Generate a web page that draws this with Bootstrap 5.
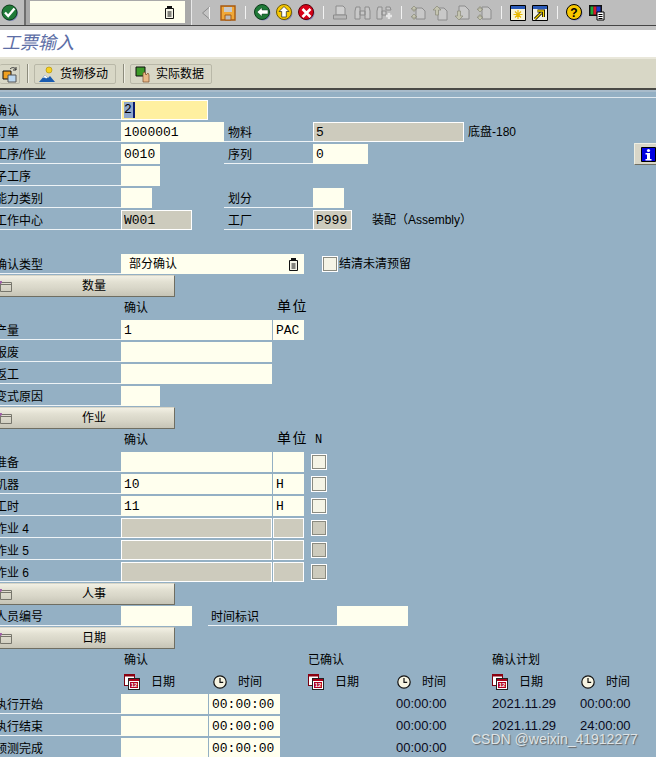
<!DOCTYPE html>
<html lang="zh">
<head>
<meta charset="UTF-8">
<title>工票输入</title>
<link rel="stylesheet" href="https://cdn.jsdelivr.net/npm/bootstrap@5.3.0/dist/css/bootstrap.min.css">
<style>
body { width: 656px; height: 757px; overflow: hidden; background: #94b0c4; position: relative;
  font-family: "Liberation Sans", "Noto Sans CJK SC", sans-serif; font-size: 12px; color: #000; }
svg { display: block; }

/* system toolbar */
.sys-bar { height: 30px; background: #bdbdbd; box-shadow: inset 0 -4px 0 #c4c4c4, inset 0 -5px 0 #454545, inset 0 -3px 0 #bdbdbd; }
.sys-inner { height: 25px; }
.tb-ok { width: 26px; padding-left: 1px; border-right: 2px solid #6e6e6e; height: 25px; }
.cmd-wrap { width: 166px; height: 25px; background: #a9a9a9; border-right: 1px solid #e8e8e8; padding: 1px 6px 2px 4px; }
.cmd-box { height: 22px; background: #ffffee; padding-right: 10px; }
.tb-gap { width: 3px; }
.tb-ico { width: 22px; height: 25px; }
.tb-sep { width: 12px; height: 25px; }
.tb-sep::after { content: ""; width: 1px; height: 13px; background: #f2f2f2; }

/* title */
.title-bar { height: 29px; background: #fff; border-bottom: 2px solid #e9e7da; padding-left: 2px; }
.title-txt { font-size: 18px; font-style: italic; color: #5d6ea6; line-height: 27px; }

/* application toolbar */
.app-bar { height: 31px; background: #d8d7c6; border-bottom: 2px solid #4a4a46; padding-top: 5px; }
.app-btn { height: 20px; padding: 0 4px; font-size: 12px; line-height: 18px; border: 1px solid #b9b8a8; border-radius: 2px; background: #d8d7c6; color: #000; white-space: nowrap; }
.app-btn-ico { width: 20px; padding: 0 0 0 2px; border-left: 0; margin-right: 7px; }
.app-sep { width: 1px; height: 19px; background: #8c8b7c; margin-right: 6px; box-shadow: 1px 0 0 #f0efe4; }
.app-btn-wide { width: 82px; margin-right: 7px; gap: 4px; }
.strip { height: 8px; background: #94b0c4; border-bottom: 1px solid #dfe8ee; box-shadow: inset 0 2px 0 #a9bccb; }

/* form */
.sap-form { padding-top: 2px; margin-left: -5px; }
.sap-row { height: 22px; }
.lbl { height: 20px; border-bottom: 1px solid #eef3f6; line-height: 22px; font-size: 12px; overflow: hidden; white-space: nowrap; flex: none; }
.lbl-a { width: 126px; }
.lbl-b { width: 89px; padding-left: 4px; }
.lbl-c { width: 129px; margin-left: 16px; padding-left: 3px; }
.fld { height: 20px; flex: none; padding: 1px 3px 0; border: 0; border-radius: 0; background: #ffffee; font-family: "Liberation Mono", monospace; font-size: 13px; line-height: 19px; color: #000; outline: 0; }
.fld-off { background: #cdcbbd; border: 1px solid #fff; padding: 0 2px; line-height: 18px; }
.fld-req { background: #fff0a0; border: 1px solid #fff; padding: 0 2px; line-height: 18px; }
.sel-txt { background: #8ea6cc; border-right: 2px solid #0c1c70; display: inline-block; height: 16px; line-height: 16px; padding-right: 1px; }
.w31 { width: 31px; } .w39 { width: 39px; } .w55 { width: 55px; } .w71 { width: 71px; }
.w87 { width: 87px; } .w103 { width: 103px; } .w151 { width: 151px; } .w183 { width: 183px; }
.gap1 { width: 1px; flex: none; }
.gap-b { width: 64px; flex: none; }
.gap-c { width: 72px; flex: none; }
.plain { font-size: 12px; line-height: 21px; white-space: nowrap; flex: none; }
.num { font-size: 13px; line-height: 20px; color: #0a0a20; }
.unit { font-size: 14px; letter-spacing: 1.5px; line-height: 17px; }
.chk { width: 14px; height: 14px; margin: 3px 0 0; flex: none; border: 1px solid #8b8b80; border-radius: 0; background: #f5f4e6; box-shadow: 0 0 0 1px #fff; appearance: none; }
.chk-off { background: #cdcbbd; }

.sec-btn { width: 180px; height: 22px; margin: -1px 0 1px; padding: 0 0 0 18px; border: 1px solid; border-color: #d8d6c8 #6f6e62 #6f6e62 #d8d6c8; border-radius: 1px; font-size: 12px; line-height: 20px; color: #000;
  background: linear-gradient(#f2f0e4, #e2e0d2 30%, #d8d6c8 60%, #c6c4b6); position: relative; text-align: center; }
.sec-ico { position: absolute; left: 4px; top: 5px; }
.info-btn { position: absolute; left: 634px; top: 143px; width: 30px; height: 22px; padding: 0 0 0 6px; border: 1px solid; border-color: #eeeee2 #6f6e62 #6f6e62 #eeeee2; border-radius: 1px; background: #d8d6c8; }
.mark-wm { position: absolute; left: 471px; top: 729px; font-size: 14px; color: #dfe4e6; text-shadow: 1px 1px 1px #666; white-space: nowrap; }
.col-ico { flex: none; }
.wk-lbl { margin-left: 32px; }
.asm-txt { margin-left: 20px; }
.type-sel { padding: 0 5px 0 8px; font-family: "Liberation Sans", "Noto Sans CJK SC", sans-serif; font-size: 12px; }
.ms-chk { margin-left: 19px; margin-top: 3px; }
.ms-txt { margin-left: 2px; }
.ms-n { margin-left: 8px; }
.hd-a { margin-left: 129px; width: 153px; }
.hd-c1 { width: 184px; }
.hd-c2 { width: 184px; }
.hd-n { margin-left: 7px; font-family: "Liberation Mono", monospace; font-size: 12px; line-height: 20px; }
.ico-row { padding-left: 129px; }
.ic-cell { display: flex; align-items: center; gap: 11px; width: 89px; flex: none; height: 20px; }
.ic-time { width: 95px; }
.val-t1 { margin-left: 116px; width: 96px; }
.val-d { width: 88px; }
</style>
</head>
<body>
<svg width="0" height="0" class="position-absolute">
  <symbol id="i-cal" viewBox="0 0 16 16">
    <rect x=".5" y=".5" width="10" height="11" fill="#fff" stroke="#7a0010"/><rect x="0" y="0" width="11" height="2.5" fill="#8a0010"/>
    <rect x="4.500" y="4.500" width="11" height="11" fill="#fff" stroke="#222"/><rect x="5" y="5" width="10" height="2" fill="#a80018"/>
    <rect x="6" y="8" width="8" height="6" fill="#b00020"/><text x="10" y="13.400" font-size="6" font-weight="700" fill="#fff" text-anchor="middle" font-family="Liberation Sans">12</text>
  </symbol>
  <symbol id="i-clock" viewBox="0 0 14 14">
    <circle cx="7" cy="7" r="6.200" fill="#f6f4e2" stroke="#111" stroke-width="1.200"/><path d="M7 3v4.300h3.200" fill="none" stroke="#111" stroke-width="1.200"/>
  </symbol>
  <symbol id="i-fold" viewBox="0 0 12 12">
    <path d="M.5 1.500h11v9H.5z" fill="none" stroke="#77766c"/><path d="M.5 3.500h11" stroke="#77766c"/><circle cx="0" cy="1" r="2" fill="#a060a8"/>
  </symbol>
  <symbol id="i-f4" viewBox="0 0 11 13">
    <path d="M1.500 2.500h8v10h-8z" fill="#f4f4e8" stroke="#111"/><path d="M3 0h5v3H3z" fill="#111"/><path d="M3.500 6h4M3.500 8h4M3.500 10h4" stroke="#111"/>
  </symbol>
</svg>

<header class="sys-bar">
  <div class="sys-inner d-flex align-items-center">
    <div class="tb-ok d-flex align-items-center">
      <svg width="18" height="18" viewBox="0 0 18 18"><circle cx="9.500" cy="9.500" r="7.500" fill="#7e84b8"/><circle cx="8.500" cy="8.500" r="7.500" fill="#1f7a38" stroke="#0b3a18"/><path d="M4 8.500l3.200 3.500L13.500 4.500" fill="none" stroke="#fff" stroke-width="2.400"/></svg>
    </div>
    <div class="cmd-wrap">
      <div class="cmd-box d-flex align-items-center justify-content-end"><svg width="11" height="13"><use href="#i-f4"/></svg></div>
    </div>
    <div class="tb-gap"></div>
    <div class="tb-ico d-flex align-items-center justify-content-center"><svg width="10" height="14" viewBox="0 0 10 14"><path d="M8.500 1L1.500 7l7 6z" fill="#c4c4c4" stroke="#8a8a8a"/><path d="M8.500 1v12" stroke="#f4f4f4"/></svg></div>
    <div class="tb-ico d-flex align-items-center justify-content-center"><svg width="16" height="16" viewBox="0 0 16 16"><path d="M1 1h14v14H1z" fill="#f0a838" stroke="#a85a10" stroke-width="1.400"/><path d="M4 2h8v5H4z" fill="#c9c9c9"/><path d="M5 10h6v5H5z" fill="#bcbcbc" stroke="#a85a10"/></svg></div>
    <div class="tb-sep d-flex align-items-center justify-content-center"></div>
    <div class="tb-ico d-flex align-items-center justify-content-center"><svg width="17" height="17" viewBox="0 0 17 17"><circle cx="9" cy="9" r="7.500" fill="#7e84b8"/><circle cx="8" cy="8" r="7.500" fill="#1f7a38" stroke="#0b3a18"/><path d="M3 8l5-4.500V6h6v4H8v2.500z" fill="#fff" stroke="#0b3a18" stroke-width=".5"/></svg></div>
    <div class="tb-ico d-flex align-items-center justify-content-center"><svg width="17" height="17" viewBox="0 0 17 17"><circle cx="9" cy="9" r="7.500" fill="#7e84b8"/><circle cx="8" cy="8" r="7.500" fill="#f8c800" stroke="#705a00"/><path d="M8 2.500l5 5h-2.700V13H5.700V7.500H3z" fill="#fff" stroke="#222" stroke-width=".7"/></svg></div>
    <div class="tb-ico d-flex align-items-center justify-content-center"><svg width="17" height="17" viewBox="0 0 17 17"><circle cx="9" cy="9" r="7.500" fill="#7e84b8"/><circle cx="8" cy="8" r="7.500" fill="#d80018" stroke="#5a0008"/><path d="M4.500 5l8 8M12.500 5l-8 8" stroke="#fff" stroke-width="2.600"/></svg></div>
    <div class="tb-sep d-flex align-items-center justify-content-center"></div>
    <div class="tb-ico d-flex align-items-center justify-content-center"><svg width="16" height="16" viewBox="0 0 16 16"><path d="M4 1h7l2 2v7H4z" fill="#cfcfcf" stroke="#8c8c8c"/><path d="M1.500 10h13v4h-13z" fill="#b8b8b8" stroke="#8c8c8c"/></svg></div>
    <div class="tb-ico d-flex align-items-center justify-content-center"><svg width="17" height="16" viewBox="0 0 17 16"><path d="M2 2h4v12H1V6zM11 2h4l1 4v8h-5zM6 6h5v4H6z" fill="#c8c8c8" stroke="#8c8c8c"/></svg></div>
    <div class="tb-ico d-flex align-items-center justify-content-center"><svg width="17" height="16" viewBox="0 0 17 16"><path d="M2 2h4v12H1V6zM10 2h4l1 3H10zM6 6h4v4H6z" fill="#c8c8c8" stroke="#8c8c8c"/><path d="M10 11h6M13 8v6" stroke="#e6e6e6" stroke-width="2.400"/></svg></div>
    <div class="tb-sep d-flex align-items-center justify-content-center"></div>
    <div class="tb-ico d-flex align-items-center justify-content-center"><svg width="16" height="16" viewBox="0 0 16 16"><path d="M6 3h6l3 3v8H6z" fill="#c8c8c8" stroke="#8c8c8c"/><path d="M4 1L1 4h2v2h2V4h2zM4 9L1 12h2v2h2v-2h2z" fill="#c4c4b0" stroke="#8a8a78" stroke-width=".7"/></svg></div>
    <div class="tb-ico d-flex align-items-center justify-content-center"><svg width="16" height="16" viewBox="0 0 16 16"><path d="M6 3h6l3 3v9H6z" fill="#c8c8c8" stroke="#8c8c8c"/><path d="M5 1L1 5h2.500v5h3V5H9z" fill="#c4c4b0" stroke="#8a8a78" stroke-width=".7"/></svg></div>
    <div class="tb-ico d-flex align-items-center justify-content-center"><svg width="16" height="16" viewBox="0 0 16 16"><path d="M5 1h6l4 4v9H5z" fill="#c8c8c8" stroke="#8c8c8c"/><path d="M5 15L1 11h2.500V6h3v5H9z" fill="#c4c4b0" stroke="#8a8a78" stroke-width=".7"/></svg></div>
    <div class="tb-ico d-flex align-items-center justify-content-center"><svg width="16" height="16" viewBox="0 0 16 16"><path d="M6 2h6l3 3v9H6z" fill="#c8c8c8" stroke="#8c8c8c"/><path d="M4 7L1 4h2V2h2v2h2zM4 15l-3-3h2v-2h2v2h2z" fill="#c4c4b0" stroke="#8a8a78" stroke-width=".7"/></svg></div>
    <div class="tb-sep d-flex align-items-center justify-content-center"></div>
    <div class="tb-ico d-flex align-items-center justify-content-center"><svg width="16" height="16" viewBox="0 0 16 16"><path d="M.5.500h15v15H.5z" fill="#f8f4d8" stroke="#000"/><path d="M1 1h14v3H1z" fill="#2a5ab8"/><path d="M8 5v9M3.500 9.500h9M5 6.500l6 6M11 6.500l-6 6" stroke="#e8b800" stroke-width="1.200"/></svg></div>
    <div class="tb-ico d-flex align-items-center justify-content-center"><svg width="16" height="16" viewBox="0 0 16 16"><path d="M.5.500h15v15H.5z" fill="#f0f0e4" stroke="#000"/><path d="M1 1h14v3H1z" fill="#2a5ab8"/><path d="M3 14l6-6M5.500 6h6v6" fill="none" stroke="#000" stroke-width="3"/><path d="M3 14l6-6M5.500 6h6v6" fill="none" stroke="#f8d800" stroke-width="1.400"/></svg></div>
    <div class="tb-sep d-flex align-items-center justify-content-center"></div>
    <div class="tb-ico d-flex align-items-center justify-content-center"><svg width="17" height="17" viewBox="0 0 17 17"><circle cx="9" cy="9" r="7.500" fill="#7e84b8"/><circle cx="8" cy="8" r="7.500" fill="#f8c800" stroke="#000"/><text x="8" y="12.500" font-size="12" font-weight="700" text-anchor="middle" font-family="Liberation Sans" fill="#000">?</text></svg></div>
    <div class="tb-ico d-flex align-items-center justify-content-center"><svg width="17" height="17" viewBox="0 0 17 17"><path d="M1 1h13v11H1z" fill="#111"/><path d="M2.500 2.500h3v8h-3z" fill="#20a838"/><path d="M5.500 2.500h3v8h-3z" fill="#d81828"/><path d="M8.500 2.500h4v8h-4z" fill="#2038c8"/><path d="M9 8h7v8H9z" fill="#fff" stroke="#000"/><path d="M10.500 10.500h4M10.500 12.500h4M10.500 14.500h4" stroke="#000"/></svg></div>
  </div>
</header>

<div class="title-bar"><div class="title-txt">工票输入</div></div>

<nav class="app-bar d-flex align-items-start">
  <button type="button" class="btn app-btn app-btn-ico d-flex align-items-center"><svg width="17" height="17" viewBox="0 0 17 17"><path d="M1 5h8v8H1z" fill="#f0a020" stroke="#111"/><path d="M6 9h8v7H6z" fill="#bcd8f0" stroke="#555"/><path d="M8 3c2-2 5-2 6 1M14 4V1M14 4h-3" fill="none" stroke="#333"/></svg></button>
  <div class="app-sep"></div>
  <button type="button" class="btn app-btn app-btn-wide d-flex align-items-center"><svg width="17" height="17" viewBox="0 0 17 17" class="col-ico"><circle cx="10" cy="4" r="3" fill="#f8d020" stroke="#a88a00" stroke-width=".6"/><path d="M0 16l6-7 3 3 2-2 5 6z" fill="#1a5cb0"/><path d="M6 9l-2 3 2-.6 1 1 1.500-.6z" fill="#fff"/></svg><span>货物移动</span></button>
  <div class="app-sep"></div>
  <button type="button" class="btn app-btn app-btn-wide d-flex align-items-center"><svg width="17" height="17" viewBox="0 0 17 17" class="col-ico"><path d="M1 1h9v9H1z" fill="#3c9a28" stroke="#111"/><path d="M8 16V7l2-1 1 3 2-2 1 2v7z" fill="#e8b888" stroke="#7a4a28" stroke-width=".7"/></svg><span>实际数据</span></button>
</nav>
<div class="strip"></div>

<main class="sap-form">
  <div class="sap-row d-flex">
    <div class="lbl lbl-a">确认</div>
    <div class="fld fld-req w87"><span class="sel-txt">2</span></div>
  </div>
  <div class="sap-row d-flex">
    <div class="lbl lbl-a">订单</div>
    <input class="fld w103" value="1000001">
    <div class="lbl lbl-b">物料</div>
    <input class="fld fld-off w151" value="5" readonly>
    <div class="plain ms-1">底盘-180</div>
  </div>
  <div class="sap-row d-flex">
    <div class="lbl lbl-a">工序/作业</div>
    <input class="fld w39" value="0010">
    <div class="gap-b"></div>
    <div class="lbl lbl-b">序列</div>
    <input class="fld w55" value="0">
  </div>
  <div class="sap-row d-flex">
    <div class="lbl lbl-a">子工序</div>
    <input class="fld w39">
  </div>
  <div class="sap-row d-flex">
    <div class="lbl lbl-a">能力类别</div>
    <input class="fld w31">
    <div class="gap-c"></div>
    <div class="lbl lbl-b">划分</div>
    <input class="fld w31">
  </div>
  <div class="sap-row d-flex">
    <div class="lbl lbl-a">工作中心</div>
    <input class="fld fld-off w71" value="W001" readonly>
    <div class="lbl lbl-b wk-lbl">工厂</div>
    <input class="fld fld-off w39" value="P999" readonly>
    <div class="plain asm-txt">装配（Assembly）</div>
  </div>
  <div class="sap-row"></div>
  <div class="sap-row d-flex">
    <div class="lbl lbl-a">确认类型</div>
    <div class="fld w183 d-flex align-items-center justify-content-between type-sel"><span>部分确认</span><svg width="11" height="13"><use href="#i-f4"/></svg></div>
    <input type="checkbox" class="chk ms-chk">
    <div class="plain ms-txt">结清未清预留</div>
  </div>

  <button type="button" class="btn sec-btn d-block"><svg class="sec-ico" width="12" height="12"><use href="#i-fold"/></svg>数量</button>
  <div class="sap-row d-flex">
    <div class="hd-a plain">确认</div><div class="plain unit">单位</div>
  </div>
  <div class="sap-row d-flex">
    <div class="lbl lbl-a">产量</div><input class="fld w151" value="1"><div class="gap1"></div><input class="fld w31" value="PAC">
  </div>
  <div class="sap-row d-flex"><div class="lbl lbl-a">报废</div><input class="fld w151"></div>
  <div class="sap-row d-flex"><div class="lbl lbl-a">返工</div><input class="fld w151"></div>
  <div class="sap-row d-flex"><div class="lbl lbl-a">变式原因</div><input class="fld w39"></div>

  <button type="button" class="btn sec-btn d-block"><svg class="sec-ico" width="12" height="12"><use href="#i-fold"/></svg>作业</button>
  <div class="sap-row d-flex">
    <div class="hd-a plain">确认</div><div class="plain unit">单位</div><div class="plain hd-n">N</div>
  </div>
  <div class="sap-row d-flex"><div class="lbl lbl-a">准备</div><input class="fld w151"><div class="gap1"></div><input class="fld w31"><input type="checkbox" class="chk ms-n"></div>
  <div class="sap-row d-flex"><div class="lbl lbl-a">机器</div><input class="fld w151" value="10"><div class="gap1"></div><input class="fld w31" value="H"><input type="checkbox" class="chk ms-n"></div>
  <div class="sap-row d-flex"><div class="lbl lbl-a">工时</div><input class="fld w151" value="11"><div class="gap1"></div><input class="fld w31" value="H"><input type="checkbox" class="chk ms-n"></div>
  <div class="sap-row d-flex"><div class="lbl lbl-a">作业 4</div><input class="fld fld-off w151" readonly><div class="gap1"></div><input class="fld fld-off w31" readonly><input type="checkbox" class="chk chk-off ms-n"></div>
  <div class="sap-row d-flex"><div class="lbl lbl-a">作业 5</div><input class="fld fld-off w151" readonly><div class="gap1"></div><input class="fld fld-off w31" readonly><input type="checkbox" class="chk chk-off ms-n"></div>
  <div class="sap-row d-flex"><div class="lbl lbl-a">作业 6</div><input class="fld fld-off w151" readonly><div class="gap1"></div><input class="fld fld-off w31" readonly><input type="checkbox" class="chk chk-off ms-n"></div>

  <button type="button" class="btn sec-btn d-block"><svg class="sec-ico" width="12" height="12"><use href="#i-fold"/></svg>人事</button>
  <div class="sap-row d-flex">
    <div class="lbl lbl-a">人员编号</div><input class="fld w71"><div class="lbl lbl-c">时间标识</div><input class="fld w71">
  </div>

  <button type="button" class="btn sec-btn d-block"><svg class="sec-ico" width="12" height="12"><use href="#i-fold"/></svg>日期</button>
  <div class="sap-row d-flex">
    <div class="hd-a plain hd-c1">确认</div><div class="plain hd-c2">已确认</div><div class="plain">确认计划</div>
  </div>
  <div class="sap-row d-flex align-items-start ico-row">
    <div class="ic-cell"><svg width="16" height="16"><use href="#i-cal"/></svg><span>日期</span></div>
    <div class="ic-cell ic-time"><svg width="14" height="14"><use href="#i-clock"/></svg><span>时间</span></div>
    <div class="ic-cell"><svg width="16" height="16"><use href="#i-cal"/></svg><span>日期</span></div>
    <div class="ic-cell ic-time"><svg width="14" height="14"><use href="#i-clock"/></svg><span>时间</span></div>
    <div class="ic-cell"><svg width="16" height="16"><use href="#i-cal"/></svg><span>日期</span></div>
    <div class="ic-cell ic-time"><svg width="14" height="14"><use href="#i-clock"/></svg><span>时间</span></div>
  </div>
  <div class="sap-row d-flex">
    <div class="lbl lbl-a">执行开始</div><input class="fld w87"><div class="gap1"></div><input class="fld w71" value="00:00:00">
    <div class="plain num val-t1">00:00:00</div><div class="plain num val-d">2021.11.29</div><div class="plain num">00:00:00</div>
  </div>
  <div class="sap-row d-flex">
    <div class="lbl lbl-a">执行结束</div><input class="fld w87"><div class="gap1"></div><input class="fld w71" value="00:00:00">
    <div class="plain num val-t1">00:00:00</div><div class="plain num val-d">2021.11.29</div><div class="plain num">24:00:00</div>
  </div>
  <div class="sap-row d-flex">
    <div class="lbl lbl-a">预测完成</div><input class="fld w87"><div class="gap1"></div><input class="fld w71" value="00:00:00">
    <div class="plain num val-t1">00:00:00</div>
  </div>
</main>

<button type="button" class="btn info-btn" aria-label="info"><svg width="15" height="15" viewBox="0 0 15 15"><path d="M.5.500h14v14H.5z" fill="#0000e0" stroke="#000"/><circle cx="7.500" cy="3.500" r="1.600" fill="#fff"/><path d="M4.500 6h4.500v6h1.500v1.500h-6V12h1.500V7.500H4.500z" fill="#fff"/></svg></button>
<div class="mark-wm">CSDN @weixin_41912277</div>

<script src="https://cdn.jsdelivr.net/npm/bootstrap@5.3.0/dist/js/bootstrap.bundle.min.js"></script>
</body>
</html>
